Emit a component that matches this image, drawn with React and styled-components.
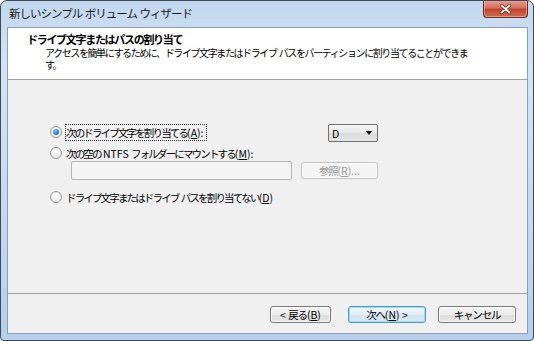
import React from 'react'
import styled, { createGlobalStyle } from 'styled-components'

const Global = createGlobalStyle`
  html, body { margin: 0; padding: 0; background: #ffffff; }
  body { font-family: "Noto Sans CJK JP", "Noto Sans", sans-serif; }
`

const Frame = styled.div`
  box-sizing: border-box;
  width: 534px;
  height: 341px;
  display: flex;
  flex-direction: column;
  border: 1px solid #3c4a5c;
  border-radius: 7px 7px 4px 4px;
  background: linear-gradient(180deg, #c2d7ee 0%, #d4e4f5 20%, #c6daf0 60%, #b6cfea 100%);
  overflow: hidden;
`

const TitleBar = styled.div`
  height: 26px;
  display: flex;
  align-items: flex-start;
  justify-content: space-between;
  padding-left: 8px;
  padding-right: 5px;
  flex-shrink: 0;
`

const Title = styled.div`
  font-size: 11.5px;
  color: #1a1a1a;
  letter-spacing: -1px;
  margin-top: 4px;
  white-space: pre;
`

// latin bits keep their normal spacing
const L = styled.span`
  letter-spacing: 0;
`

const Close = styled.div`
  width: 43px;
  height: 17px;
  margin-top: -1px;
  border: 1px solid #6d2a23;
  border-top: none;
  border-radius: 0 0 4px 4px;
  background: linear-gradient(180deg, #e8a496 0%, #d7705c 45%, #c2452e 55%, #cf6b4f 100%);
  display: flex;
  align-items: center;
  justify-content: center;
  box-shadow: inset 0 0 0 1px rgba(255, 255, 255, 0.35);
`

const Client = styled.div`
  flex: 1;
  margin: 0 5px 6px 6px;
  border: 1px solid #8d9eb3;
  background: #f0f0f0;
  display: flex;
  flex-direction: column;
`

const Header = styled.div`
  height: 52px;
  background: #ffffff;
  border-bottom: 1px solid #a0a0a0;
  padding: 4px 0 0 19px;
  box-sizing: border-box;
  flex-shrink: 0;
`

const HeaderTitle = styled.div`
  font-size: 11px;
  font-weight: bold;
  color: #000;
  letter-spacing: -1.3px;
  line-height: 15px;
`

const HeaderText = styled.div`
  font-size: 10px;
  color: #000;
  letter-spacing: -1.4px;
  line-height: 12px;
  height: 12px;
  padding-left: 18px;
  white-space: pre;
`

const Body = styled.div`
  flex: 1;
  border-bottom: 1px solid #a0a0a0;
  display: grid;
  grid-template-columns: 251px auto;
  grid-template-rows: 22px 16px 27px 18px;
  align-items: start;
  padding: 43px 0 0 42px;
  box-sizing: border-box;
  align-content: start;
`

const Option = styled.label`
  display: flex;
  align-items: center;
  gap: 4px;
  font-size: 10.5px;
  letter-spacing: -1.85px;
  color: #000;
  white-space: pre;
  height: ${p => p.$h || 18}px;
`

const Radio = styled.span`
  width: 10px;
  height: 10px;
  border-radius: 50%;
  border: 1px solid #9a9a9a;
  background: radial-gradient(circle at 50% 40%, #ffffff 0%, #e4e4e4 100%);
  display: inline-flex;
  align-items: center;
  justify-content: center;
  flex-shrink: 0;
  &::after {
    content: '';
    width: 6px;
    height: 6px;
    border-radius: 50%;
    background: ${p => (p.$checked ? 'radial-gradient(circle at 40% 35%, #7fc3f5 0%, #1a6fc0 70%, #0d4f96 100%)' : 'transparent')};
  }
`

const Focus = styled.span`
  outline: 1px dotted #333;
  padding-right: 2px;
`

const Key = styled.span`
  text-decoration: underline;
  letter-spacing: 0;
`

const Select = styled.div`
  width: 50px;
  height: 18px;
  border: 1px solid #707070;
  border-radius: 2px;
  background: linear-gradient(180deg, #f4f4f4 0%, #e9e9e9 50%, #dcdcdc 51%, #e4e4e4 100%);
  display: flex;
  align-items: center;
  justify-content: space-between;
  padding: 0 5px 0 3px;
  box-sizing: border-box;
  font-size: 10.5px;
  margin: 1px 0 0 27px;
`

const Caret = styled.span`
  width: 0;
  height: 0;
  border-left: 3px solid transparent;
  border-right: 3px solid transparent;
  border-top: 4px solid #000;
`

const PathBox = styled.div`
  width: 221px;
  height: 19px;
  border: 1px solid #b5b5b5;
  border-radius: 2px;
  background: #f4f4f4;
  margin-left: 21px;
  box-sizing: border-box;
`

const Button = styled.div`
  box-sizing: border-box;
  width: ${p => p.$w}px;
  height: 17px;
  margin-top: ${p => p.$top || 0}px;
  border: 1px solid ${p => (p.$default ? '#3c9fd6' : p.$disabled ? '#c2c2c2' : '#7a7a7a')};
  border-radius: 3px;
  background: ${p => (p.$disabled
    ? '#f4f4f4'
    : p.$default
      ? 'linear-gradient(180deg, #f2f8fc 0%, #e3eef7 50%, #d2e4f2 51%, #dde9f4 100%)'
      : 'linear-gradient(180deg, #f4f4f4 0%, #ebebeb 50%, #dddddd 51%, #e6e6e6 100%)')};
  box-shadow: ${p => (p.$default ? 'inset 0 0 0 1px #a6d8f4' : 'inset 0 0 0 1px rgba(255,255,255,0.7)')};
  color: ${p => (p.$disabled ? '#9a9a9a' : '#000')};
  font-size: 10.5px;
  letter-spacing: -1.2px;
  white-space: pre;
  display: flex;
  align-items: center;
  justify-content: center;
`

const Footer = styled.div`
  height: 39px;
  flex-shrink: 0;
  display: flex;
  align-items: flex-start;
  justify-content: flex-end;
  padding: 12px 11px 0 0;
  box-sizing: border-box;
`

const Gap = styled.div`
  width: ${p => p.$w}px;
`

export default function App() {
  return (
    <>
      <Global />
      <Frame>
        <TitleBar>
          <Title>新しいシンプル<L> </L>ボリューム<L> </L>ウィザード</Title>
          <Close>
            <svg width="11" height="10" viewBox="0 0 11 10">
              <path d="M1.5 1.5 L9.5 8.5 M9.5 1.5 L1.5 8.5" stroke="#5a1d16" strokeWidth="3.2" strokeLinecap="round" />
              <path d="M1.5 1.5 L9.5 8.5 M9.5 1.5 L1.5 8.5" stroke="#ffffff" strokeWidth="1.8" strokeLinecap="round" />
            </svg>
          </Close>
        </TitleBar>
        <Client>
          <Header>
            <HeaderTitle>ドライブ文字またはパスの割り当て</HeaderTitle>
            <HeaderText>アクセスを簡単にするために、ドライブ文字またはドライブ<L> </L>パスをパーティションに割り当てることができま</HeaderText>
            <HeaderText>す。</HeaderText>
          </Header>
          <Body>
            <Option>
              <Radio $checked />
              <Focus>次のドライブ文字を割り当てる<L>(<Key>A</Key>):</L></Focus>
            </Option>
            <Select>
              <span>D</span>
              <Caret />
            </Select>
            <Option $h={16}>
              <Radio />
              <span>次の空の<L> NTFS </L>フォルダーにマウントする<L>(<Key>M</Key>):</L></span>
            </Option>
            <span />
            <PathBox />
            <Button $w={77} $disabled $top={1}>参照<L>(<Key>R</Key>)...</L></Button>
            <Option>
              <Radio />
              <span>ドライブ文字またはドライブ<L> </L>パスを割り当てない<L>(<Key>D</Key>)</L></span>
            </Option>
          </Body>
          <Footer>
            <Button $w={61}><L>&lt; </L>戻る<L>(<Key>B</Key>)</L></Button>
            <Gap $w={17} />
            <Button $w={78} $default>次へ<L>(<Key>N</Key>) &gt;</L></Button>
            <Gap $w={12} />
            <Button $w={78}>キャンセル</Button>
          </Footer>
        </Client>
      </Frame>
    </>
  )
}
